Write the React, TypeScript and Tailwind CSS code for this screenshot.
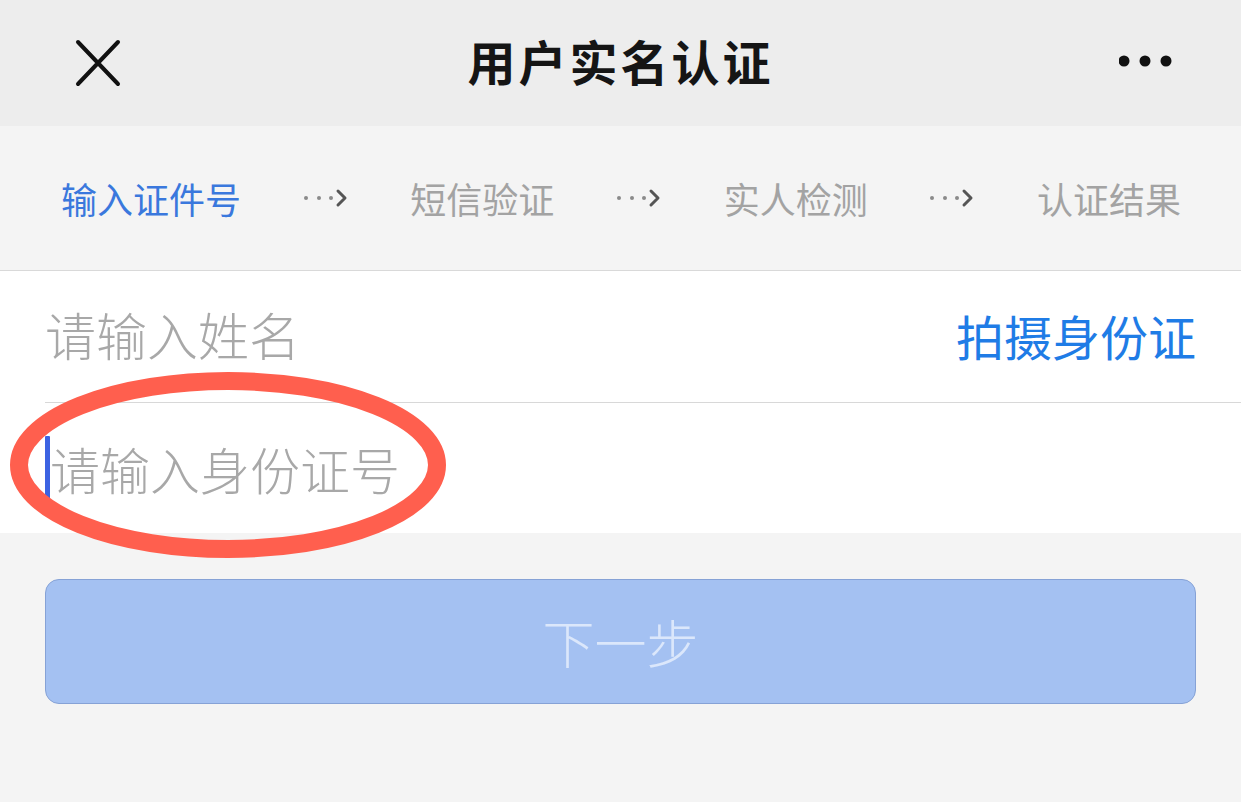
import React from 'react';

const steps = ['输入证件号', '短信验证', '实人检测', '认证结果'];

const StepArrow: React.FC = () => (
  <svg width="46" height="20" viewBox="0 0 46 20" className="shrink-0">
    <circle cx="3" cy="10" r="2" fill="#8a8a8a" />
    <circle cx="16" cy="10" r="2" fill="#8a8a8a" />
    <circle cx="28" cy="10" r="2" fill="#8a8a8a" />
    <path d="M35 3 L42 10 L35 17" fill="none" stroke="#555" strokeWidth="3" strokeLinecap="round" strokeLinejoin="round" />
  </svg>
);

export default function App() {
  return (
    <div
      className="relative w-[1241px] h-[802px] overflow-hidden bg-[#f4f4f4]"
      style={{ fontFamily: '"Noto Sans CJK SC", "Noto Sans", sans-serif' }}
    >
      {/* top bar */}
      <div className="h-[126px] bg-[#ededed] flex items-center justify-between px-[74px] pr-[66px]">
        <svg width="48" height="48" viewBox="0 0 48 48">
          <path d="M4 3 L44 45 M44 3 L4 45" stroke="#111" strokeWidth="4" strokeLinecap="round" />
        </svg>
        <h1 className="text-[48px] font-bold text-[#151515] tracking-[3px] leading-none -mt-[6px]">用户实名认证</h1>
        <svg width="56" height="14" viewBox="0 0 56 14" className="-mt-[4px]">
          <circle cx="5" cy="7" r="5.5" fill="#111" />
          <circle cx="26" cy="7" r="5.5" fill="#111" />
          <circle cx="47" cy="7" r="5.5" fill="#111" />
        </svg>
      </div>

      {/* steps */}
      <div className="h-[145px] flex items-center justify-between pl-[61px] pr-[60px] border-b border-[#d9d9d9]">
        {steps.map((s, i) => (
          <React.Fragment key={s}>
            {i > 0 && <StepArrow />}
            <span className={`text-[36px] leading-none ${i === 0 ? 'text-[#3a78dd]' : 'text-[#a3a3a3]'}`}>{s}</span>
          </React.Fragment>
        ))}
      </div>

      {/* form */}
      <div className="bg-white">
        <div className="h-[131px] flex items-center justify-between pl-[45px] pr-[45px] pb-[4px]">
          <span className="text-[51px] leading-none text-[#a8a8a8] font-light">请输入姓名</span>
          <span className="text-[48px] leading-none text-[#1f7ce6]">拍摄身份证</span>
        </div>
        <div className="ml-[45px] h-px bg-[#d8d8d8]" />
        <div className="h-[130px] flex items-center pl-[45px]">
          <span className="w-[5px] h-[64px] bg-[#3c63e2] rounded-[1px]" />
          <span className="text-[50px] leading-none text-[#a8a8a8] font-light">请输入身份证号</span>
        </div>
      </div>

      {/* next button */}
      <div className="px-[45px] pt-[46px]">
        <button className="w-full h-[125px] rounded-[14px] bg-[#a4c1f2] border border-[#86a2d6] flex items-center justify-center">
          <span className="text-[52px] leading-none text-[#dbe7fb] font-light">下一步</span>
        </button>
      </div>

      {/* annotation ellipse */}
      <svg className="absolute left-0 top-0 pointer-events-none" width="1241" height="802">
        <ellipse cx="228" cy="465" rx="209" ry="84" fill="none" stroke="#ff5f4e" strokeWidth="18" />
      </svg>
    </div>
  );
}
